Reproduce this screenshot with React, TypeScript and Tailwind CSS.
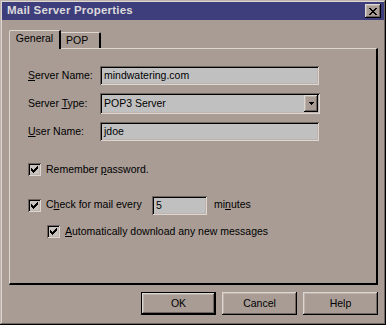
import React from "react";

const raised =
  "shadow-[inset_-1px_-1px_0_#000,inset_1px_1px_0_#ddd6d1,inset_-2px_-2px_0_#6e6460,inset_2px_2px_0_#bdb3ad]";
const sunken =
  "shadow-[inset_1px_1px_0_#6e6460,inset_-1px_-1px_0_#ddd6d1,inset_2px_2px_0_#000,inset_-2px_-2px_0_#bdb3ad]";

function Check({ className = "" }: { className?: string }) {
  return (
    <div className={`w-[13px] h-[13px] bg-[#c9c3bf] flex items-center justify-center shrink-0 ${sunken} ${className}`}>
      <svg width="7" height="7" viewBox="0 0 7 7" shapeRendering="crispEdges">
        <path d="M0 2h1v3h-1zM1 3h1v3h-1zM2 4h1v3h-1zM3 3h1v3h-1zM4 2h1v3h-1zM5 1h1v3h-1zM6 0h1v3h-1z" fill="#000" />
      </svg>
    </div>
  );
}

function Field({ value, className = "" }: { value: string; className?: string }) {
  return (
    <div className={`h-[19px] bg-[#c0c0c0] flex items-center pl-[4px] pt-[1px] ${sunken} ${className}`}>
      {value}
    </div>
  );
}

function Button({ label, isDefault }: { label: string; isDefault?: boolean }) {
  return (
    <div
      className={`w-[75px] h-[23px] flex items-center justify-center ${isDefault ? "border border-black" : ""}`}
    >
      <div className={`w-full h-full flex items-center justify-center ${raised}`}>{label}</div>
    </div>
  );
}

export default function App() {
  return (
    <div
      className="w-[386px] h-[325px] bg-[#a89c95] p-[2px] flex flex-col text-[10.5px] text-black shadow-[inset_-1px_-1px_0_#000,inset_1px_1px_0_#bdb3ad,inset_-2px_-2px_0_#6e6460,inset_2px_2px_0_#ddd6d1]"
      style={{ fontFamily: '"Liberation Sans", Arial, sans-serif' }}
    >
      {/* title bar */}
      <div className="h-[18px] bg-[#3f3e7d] flex items-center justify-between pl-[5px] pr-[3px]">
        <span className="font-bold text-[11.5px] text-[#dcdada] tracking-[0.2px]">Mail Server Properties</span>
        <div className={`w-[16px] h-[14px] bg-[#a89c95] flex items-center justify-center ${raised}`}>
          <svg width="8" height="7" viewBox="0 0 8 7" shapeRendering="crispEdges">
            <path d="M0 0h2v1h-2zM6 0h2v1h-2zM1 1h2v1h-2zM5 1h2v1h-2zM2 2h4v1h-4zM3 3h2v1h-2zM2 4h4v1h-4zM1 5h2v1h-2zM5 5h2v1h-2zM0 6h2v1h-2zM6 6h2v1h-2z" fill="#000" />
          </svg>
        </div>
      </div>

      {/* tabs */}
      <div className="pl-[7px] pr-[6px] pt-[10px] flex flex-col">
        <div className="flex items-end h-[18px] relative z-10">
          <div className="w-[52px] h-[19px] -mb-[1px] bg-[#a89c95] border-l border-t border-[#ddd6d1] border-r-2 border-r-black rounded-tl-[2px] flex items-center justify-center pb-[2px]">
            General
          </div>
          <div className="w-[40px] h-[16px] bg-[#a89c95] border-t border-[#ddd6d1] border-r-2 border-r-black rounded-tr-[2px] flex items-center pl-[5px] pt-[1px]">
            POP
          </div>
        </div>

        {/* panel */}
        <div className="h-[237px] border-l border-t border-[#ddd6d1] border-r-2 border-b-2 border-r-black border-b-black pl-[18px] pt-[17px] flex flex-col">
          <div className="flex items-center h-[19px]">
            <span className="w-[72px]">
              <u>S</u>erver Name:
            </span>
            <Field value="mindwatering.com" className="w-[219px]" />
          </div>
          <div className="flex items-center h-[21px] mt-[8px]">
            <span className="w-[72px]">
              Server <u>T</u>ype:
            </span>
            <div className={`w-[220px] h-[21px] bg-[#c0c0c0] flex items-center pl-[4px] pr-[2px] ${sunken}`}>
              <span className="flex-1 pt-[1px]">POP3 Server</span>
              <div className={`w-[14px] h-[17px] bg-[#a89c95] flex items-center justify-center ${raised}`}>
                <svg width="5" height="3" viewBox="0 0 5 3" shapeRendering="crispEdges">
                  <path d="M0 0h5v1h-5zM1 1h3v1h-3zM2 2h1v1h-1z" fill="#000" />
                </svg>
              </div>
            </div>
          </div>
          <div className="flex items-center h-[19px] mt-[8px]">
            <span className="w-[72px]">
              <u>U</u>ser Name:
            </span>
            <Field value="jdoe" className="w-[219px]" />
          </div>

          <div className="flex items-center gap-[5px] mt-[21px]">
            <Check />
            <span>
              Remember <u>p</u>assword.
            </span>
          </div>

          <div className="flex items-center mt-[18px]">
            <Check />
            <span className="ml-[5px] w-[106px]">
              C<u>h</u>eck for mail every
            </span>
            <Field value="5" className="w-[55px] h-[19px]" />
            <span className="ml-[7px]">
              mi<u>n</u>utes
            </span>
          </div>

          <div className="flex items-center gap-[5px] mt-[9px] ml-[19px]">
            <Check />
            <span>
              <u>A</u>utomatically download any new messages
            </span>
          </div>
        </div>

        {/* buttons */}
        <div className="flex justify-end gap-[6px] mt-[7px]">
          <Button label="OK" isDefault />
          <Button label="Cancel" />
          <Button label="Help" />
        </div>
      </div>
    </div>
  );
}
